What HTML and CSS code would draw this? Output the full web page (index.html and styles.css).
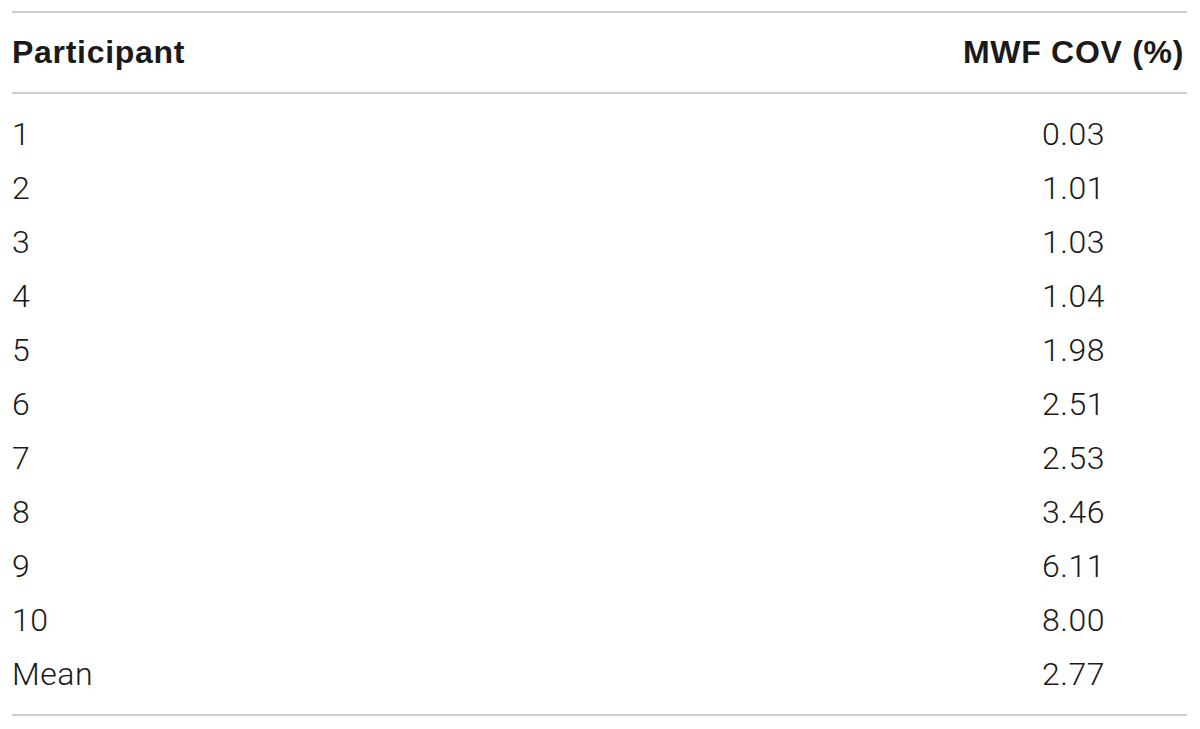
FILE: index.html
```html
<!DOCTYPE html>
<html>
<head>
<meta charset="utf-8">
<link rel="stylesheet" href="styles.css">
</head>
<body>
<table class="data">
  <thead>
    <tr><th class="c-name">Participant</th><th class="c-val">MWF COV (%)</th></tr>
  </thead>
  <tbody>
    <tr class="first"><td class="c-name">1</td><td class="c-val">0.03</td></tr>
    <tr><td class="c-name">2</td><td class="c-val">1.01</td></tr>
    <tr><td class="c-name">3</td><td class="c-val">1.03</td></tr>
    <tr><td class="c-name">4</td><td class="c-val">1.04</td></tr>
    <tr><td class="c-name">5</td><td class="c-val">1.98</td></tr>
    <tr><td class="c-name">6</td><td class="c-val">2.51</td></tr>
    <tr><td class="c-name">7</td><td class="c-val">2.53</td></tr>
    <tr><td class="c-name">8</td><td class="c-val">3.46</td></tr>
    <tr><td class="c-name">9</td><td class="c-val">6.11</td></tr>
    <tr><td class="c-name">10</td><td class="c-val">8.00</td></tr>
    <tr class="last"><td class="c-name">Mean</td><td class="c-val">2.77</td></tr>
  </tbody>
</table>
</body>
</html>
```
FILE: styles.css
```css
html, body {
  margin: 0;
  padding: 0;
  background: #ffffff;
}
body {
  padding: 11px 13px 0 12px;
}
.data {
  width: 1175px;
  border-collapse: collapse;
  color: #1a1a1a;
}
.data thead tr {
  border-top: 2px solid #cfcfcf;
  border-bottom: 2px solid #cfcfcf;
}
.data tbody tr.last {
  border-bottom: 2px solid #cfcfcf;
}
.data th {
  font-family: "Liberation Sans", Arial, sans-serif;
  font-weight: bold;
  font-size: 32px;
  letter-spacing: 0.7px;
  height: 79px;
  padding: 0;
  vertical-align: middle;
}
.data td {
  font-family: Roboto, "Liberation Sans", sans-serif;
  font-weight: 300;
  font-size: 32px;
  letter-spacing: 0.5px;
  height: 54px;
  padding: 0;
  vertical-align: middle;
}
.data tr.first td {
  padding-top: 13px;
}
.data tr.last td {
  padding-bottom: 13px;
}
.c-name {
  text-align: left;
  padding-left: 1px;
}
.data .c-val {
  text-align: center;
  width: 227px;
}
```
